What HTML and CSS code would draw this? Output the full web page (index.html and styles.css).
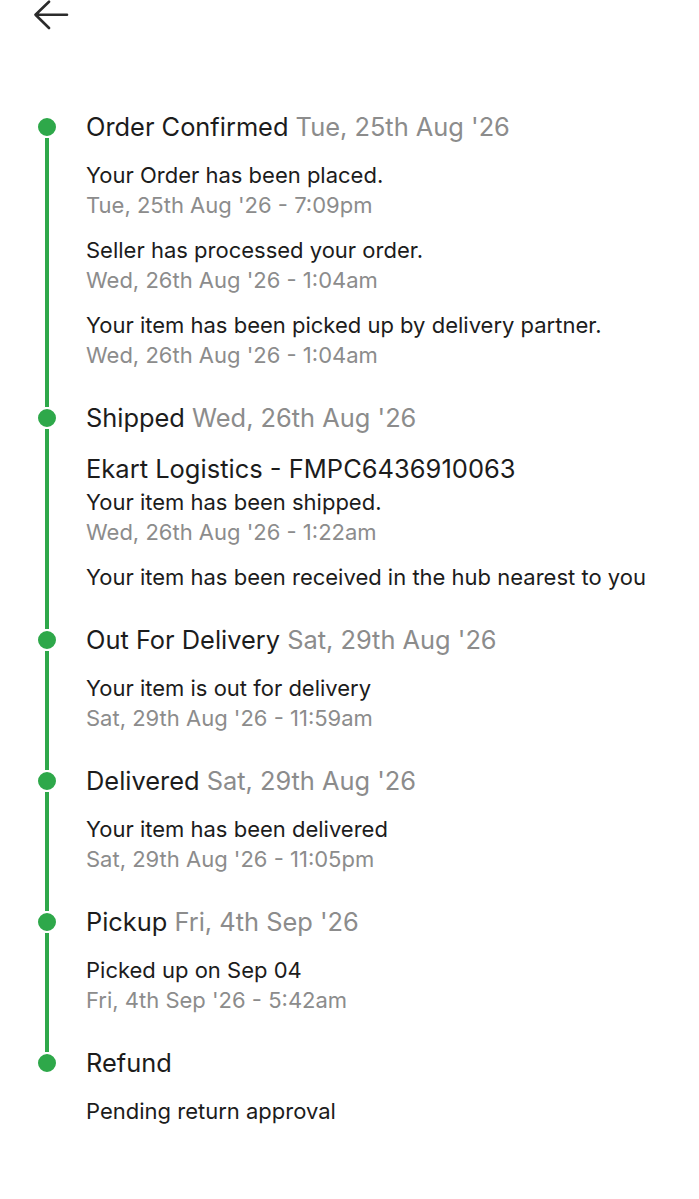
FILE: index.html
```html
<!DOCTYPE html>
<html lang="en">
<head>
    <meta charset="UTF-8">
    <meta name="viewport" content="width=device-width, initial-scale=1.0">
    <title>Order Tracking</title>
    <link rel="stylesheet" href="styles.css">
</head>
<body>
    <div class="topbar">
        <button class="back-btn" aria-label="Back">
            <svg width="36" height="30" viewBox="0 0 36 30">
                <path d="M2.5 14.7 H34 M16 1.7 L2.5 14.7 L16 28" fill="none" stroke="#2b2b2b" stroke-width="2.6" stroke-linecap="round" stroke-linejoin="round"/>
            </svg>
        </button>
    </div>

    <div class="timeline">
        <!-- Order Confirmed -->
        <div class="stage first">
            <div class="rail"><span class="seg top"></span><span class="dot"></span><span class="seg bottom"></span></div>
            <div class="content">
                <div class="stage-title">Order Confirmed <span class="muted">Tue, 25th Aug '26</span></div>
                <div class="event">
                    <div>Your Order has been placed.</div>
                    <div class="muted">Tue, 25th Aug '26 - 7:09pm</div>
                </div>
                <div class="event">
                    <div>Seller has processed your order.</div>
                    <div class="muted">Wed, 26th Aug '26 - 1:04am</div>
                </div>
                <div class="event">
                    <div>Your item has been picked up by delivery partner.</div>
                    <div class="muted">Wed, 26th Aug '26 - 1:04am</div>
                </div>
            </div>
        </div>

        <!-- Shipped -->
        <div class="stage">
            <div class="rail"><span class="seg top"></span><span class="dot"></span><span class="seg bottom"></span></div>
            <div class="content">
                <div class="stage-title">Shipped <span class="muted">Wed, 26th Aug '26</span></div>
                <div class="event">
                    <div class="courier">Ekart Logistics - FMPC6436910063</div>
                    <div>Your item has been shipped.</div>
                    <div class="muted">Wed, 26th Aug '26 - 1:22am</div>
                </div>
                <div class="event">
                    <div>Your item has been received in the hub nearest to you</div>
                </div>
            </div>
        </div>

        <!-- Out For Delivery -->
        <div class="stage">
            <div class="rail"><span class="seg top"></span><span class="dot"></span><span class="seg bottom"></span></div>
            <div class="content">
                <div class="stage-title">Out For Delivery <span class="muted">Sat, 29th Aug '26</span></div>
                <div class="event">
                    <div>Your item is out for delivery</div>
                    <div class="muted">Sat, 29th Aug '26 - 11:59am</div>
                </div>
            </div>
        </div>

        <!-- Delivered -->
        <div class="stage">
            <div class="rail"><span class="seg top"></span><span class="dot"></span><span class="seg bottom"></span></div>
            <div class="content">
                <div class="stage-title">Delivered <span class="muted">Sat, 29th Aug '26</span></div>
                <div class="event">
                    <div>Your item has been delivered</div>
                    <div class="muted">Sat, 29th Aug '26 - 11:05pm</div>
                </div>
            </div>
        </div>

        <!-- Pickup -->
        <div class="stage">
            <div class="rail"><span class="seg top"></span><span class="dot"></span><span class="seg bottom"></span></div>
            <div class="content">
                <div class="stage-title">Pickup <span class="muted">Fri, 4th Sep '26</span></div>
                <div class="event">
                    <div>Picked up on Sep 04</div>
                    <div class="muted">Fri, 4th Sep '26 - 5:42am</div>
                </div>
            </div>
        </div>

        <!-- Refund -->
        <div class="stage last">
            <div class="rail"><span class="seg top"></span><span class="dot"></span><span class="seg bottom"></span></div>
            <div class="content">
                <div class="stage-title">Refund</div>
                <div class="event">
                    <div>Pending return approval</div>
                </div>
            </div>
        </div>
    </div>
</body>
</html>
```

FILE: styles.css
```css
body {
    font-family: Inter, "Noto Sans", sans-serif;
    background-color: #ffffff;
    color: #1c1c1c;
    margin: 0;
}

.topbar {
    height: 109px;
    padding-left: 33px;
}

.back-btn {
    display: block;
    background: none;
    border: none;
    padding: 0;
    cursor: pointer;
}

.back-btn svg {
    display: block;
}

.timeline {
    padding-left: 29px;
}

.stage {
    display: flex;
    gap: 21px;
}

.rail {
    width: 36px;
    display: flex;
    flex-direction: column;
    align-items: center;
    flex-shrink: 0;
}

.seg {
    width: 4px;
    background-color: #2ea84a;
}

.seg.top {
    height: 7px;
}

.seg.bottom {
    flex: 1;
}

.first .seg.top,
.last .seg.bottom {
    background: transparent;
}

.dot {
    width: 18px;
    height: 18px;
    border-radius: 50%;
    background-color: #2ea84a;
    border: 2px solid #ffffff;
    flex-shrink: 0;
}

.content {
    padding-bottom: 30px;
}

.stage-title {
    font-size: 25.4px;
    line-height: 36px;
}

.event {
    margin-top: 15px;
    font-size: 22px;
    line-height: 30px;
}

.courier {
    font-size: 25.5px;
    line-height: 36px;
}

.muted {
    color: #8c8c8c;
}
```
